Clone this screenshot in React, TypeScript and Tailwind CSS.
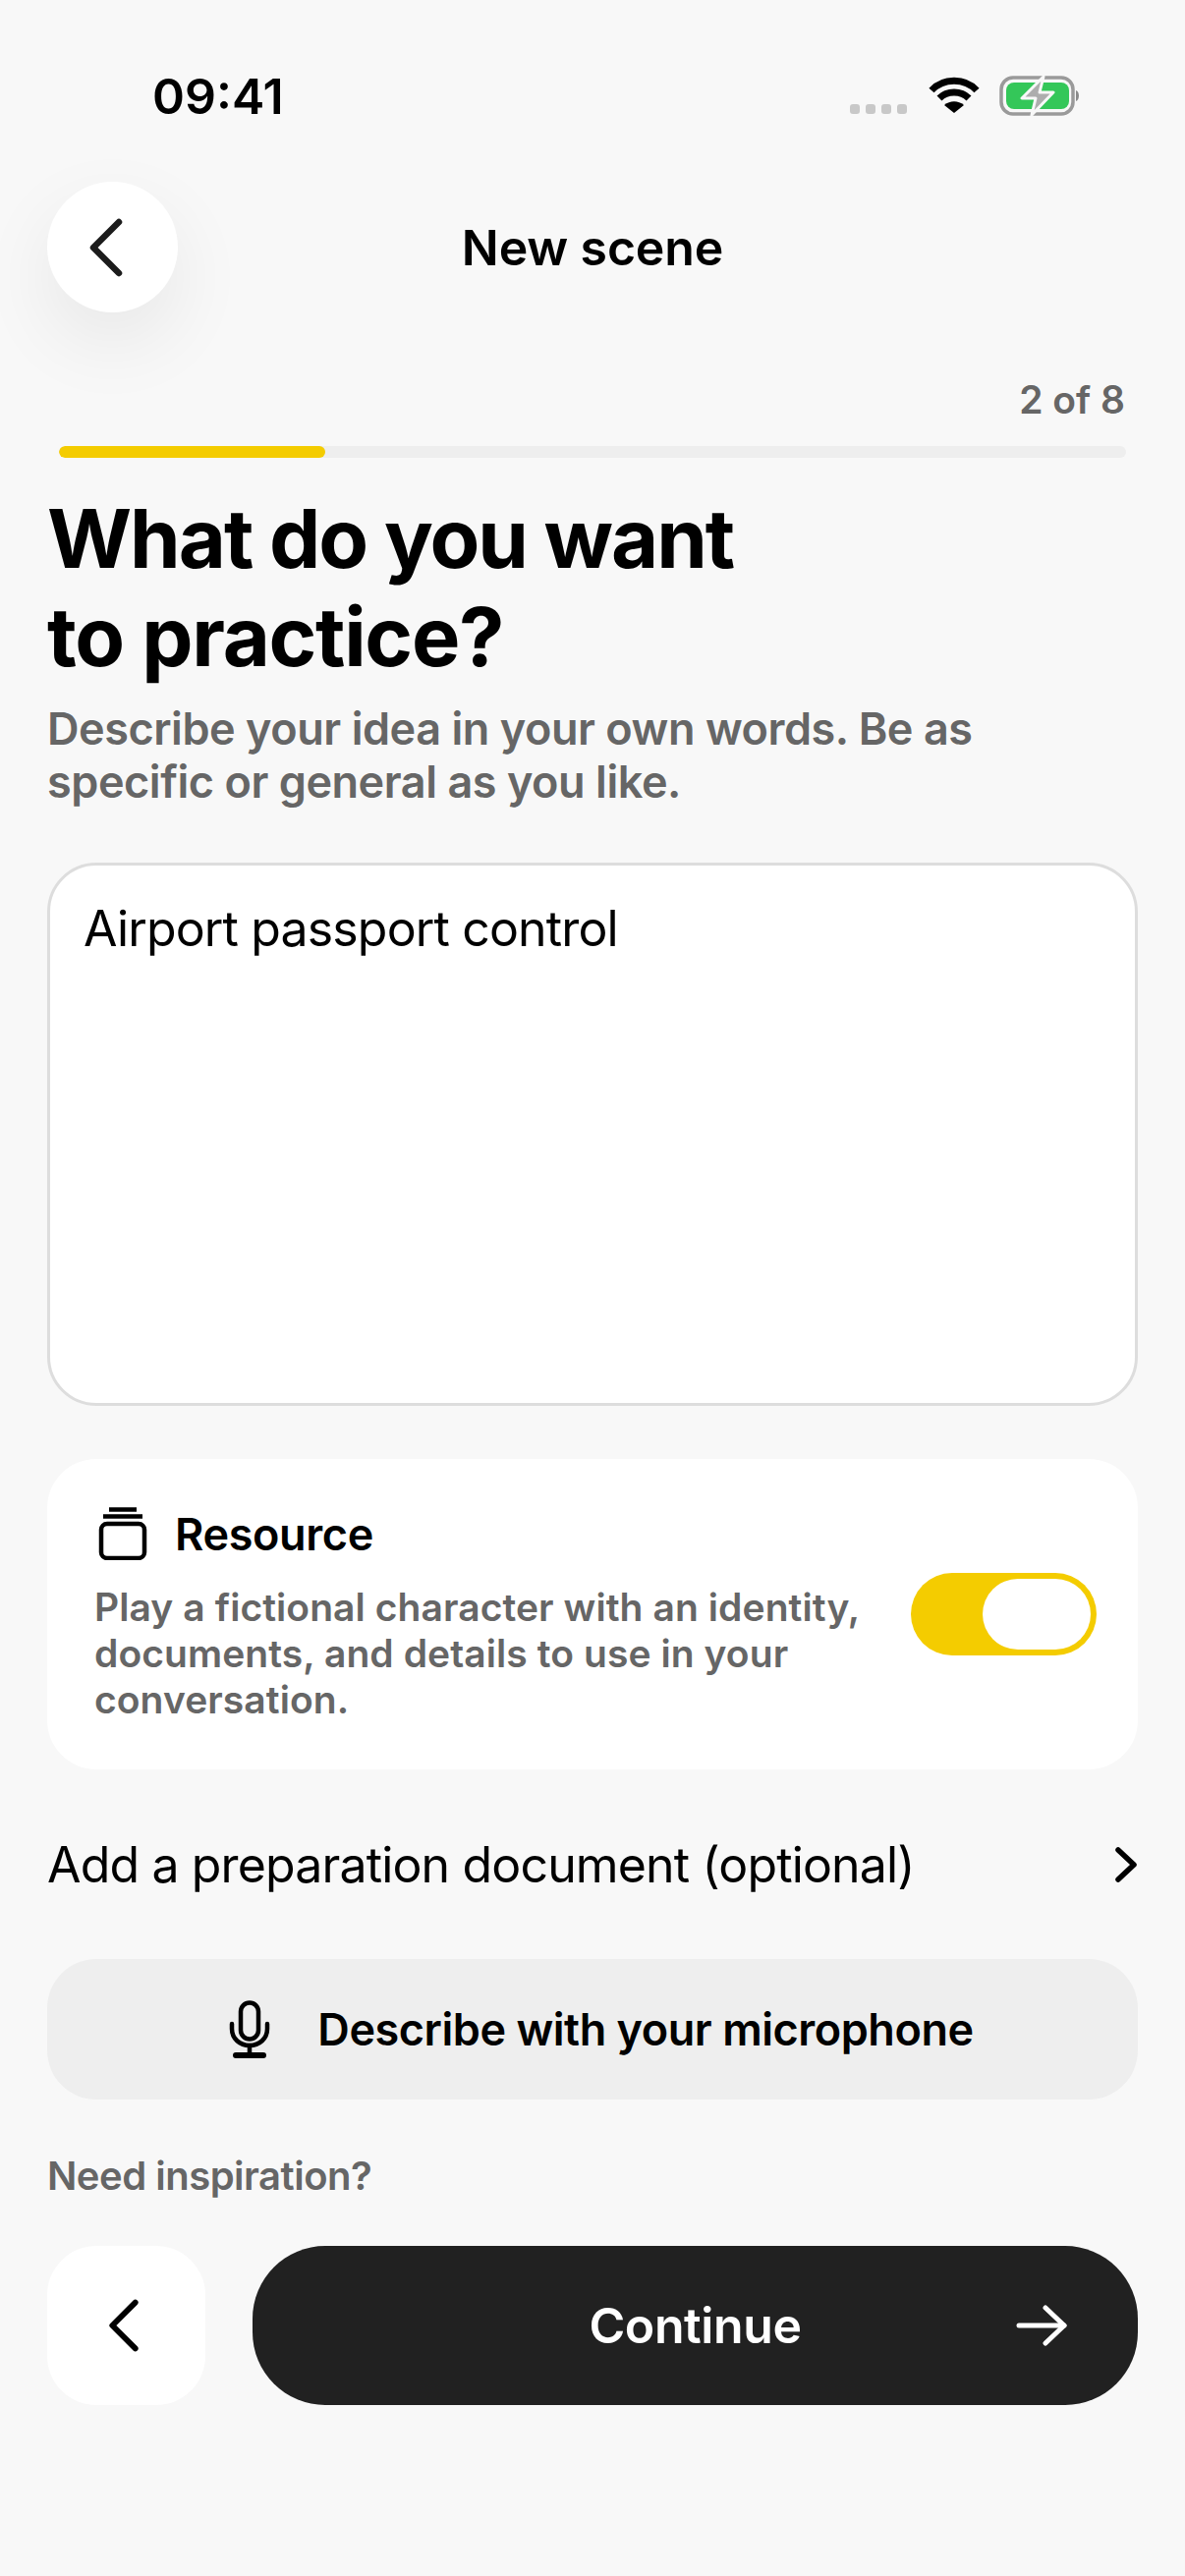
import React from "react";

const Chevron = ({ className }: { className?: string }) => (
  <svg viewBox="0 0 40 60" className={className} fill="none" stroke="currentColor" strokeWidth="6.5" strokeLinecap="round" strokeLinejoin="round">
    <path d="M33 4 L7 30 L33 56" />
  </svg>
);

export default function App() {
  return (
    <div className="w-[1206px] h-[2622px] bg-[#f8f8f8] overflow-hidden text-black" style={{ fontFamily: "Inter, 'Liberation Sans', sans-serif" }}>
      {/* status bar */}
      <div className="h-[185px] pt-[67px] pl-[155px] pr-[107px] flex justify-between items-start">
        <span className="text-[50px] leading-[62px] font-semibold">09:41</span>
        <div className="flex items-end pt-[9px]">
          <div className="flex gap-[6px] mb-[2px]">
            <span className="w-[10px] h-[10px] rounded-[3px] bg-[#c8c8c8]" />
            <span className="w-[10px] h-[10px] rounded-[3px] bg-[#c8c8c8]" />
            <span className="w-[10px] h-[10px] rounded-[3px] bg-[#c8c8c8]" />
            <span className="w-[10px] h-[10px] rounded-[3px] bg-[#c8c8c8]" />
          </div>
          <svg width="52" height="38" viewBox="0 0 52 38" fill="none" stroke="#000" strokeWidth="7" className="ml-[22px] mb-[2px]">
            <path d="M3 14 C15 1 37 1 49 14" />
            <path d="M11 22 C19 14 33 14 41 22" />
            <path d="M26 37 L16 29 C22 24 30 24 36 29 Z" fill="#000" stroke="none" />
          </svg>
          <svg width="82" height="42" viewBox="0 0 82 42" className="ml-[20px]">
            <rect x="2" y="3" width="73" height="37" rx="12" fill="none" stroke="#9a9a9a" strokeWidth="3.5" />
            <rect x="7" y="8" width="64" height="27" rx="8" fill="#34c759" />
            <path d="M78 16 C82 17 82 26 78 27 Z" fill="#8a8a8a" />
            <path d="M45 2 L23 24 H37 L33 41 L55 18 H41 Z" fill="#adadad" stroke="#f8f8f8" strokeWidth="3" strokeLinejoin="round" />
          </svg>
        </div>
      </div>

      <div className="px-[48px]">
        {/* header */}
        <div className="relative h-[133px] flex items-center justify-center">
          <button className="absolute left-0 top-0 w-[133px] h-[133px] rounded-full bg-white shadow-[0_30px_80px_rgba(0,0,0,0.07)] flex items-center justify-center text-[#1c1c1c]">
            <Chevron className="w-[40px] h-[60px] -ml-[14px]" />
          </button>
          <h1 className="text-[50px] leading-[62px] font-semibold tracking-[-0.15px]">New scene</h1>
        </div>

        {/* progress */}
        <div className="mt-[66px] text-right pr-[13px] text-[39px] leading-[46px] font-semibold text-[#666666]">2 of 8</div>
        <div className="mt-[24px] mx-[12px] h-[12px] rounded-full bg-[#eeeeee] overflow-hidden">
          <div className="h-full w-[271px] rounded-full bg-[#f4cc00]" />
        </div>

        {/* title */}
        <h2 className="mt-[32px] text-[83px] leading-[100px] font-bold tracking-[-2px]">
          What do you want<br /><span className="tracking-[-1.3px]">to practice?</span>
        </h2>
        <p className="mt-[17px] text-[45px] leading-[53.5px] font-semibold tracking-[-0.45px] text-[#666666]">Describe your idea in your own words. Be as<br />specific or general as you like.</p>

        {/* textarea */}
        <div className="mt-[56px] h-[553px] rounded-[50px] bg-white border-[3px] border-[#dddddd] pt-[31px] pl-[34px] text-[50px] leading-[66px] tracking-[-0.85px]">Airport passport control</div>

        {/* resource card */}
        <div className="mt-[54px] h-[316px] rounded-[50px] bg-white pl-[48px] pr-[42px] pt-[48px] flex items-center justify-between">
          <div className="self-start">
            <div className="flex items-center gap-[28px] h-[60px] -mt-[1px]">
              <svg width="50" height="54" viewBox="0 0 50 54" fill="none" stroke="#000" strokeWidth="4.5" className="ml-[4px] -mt-[2px]">
                <rect x="3" y="17" width="44" height="35" rx="6" />
                <path d="M5 9.5 H45" />
                <path d="M11 2.5 H39" />
              </svg>
              <span className="text-[45px] leading-[56px] font-semibold tracking-[-0.35px]">Resource</span>
            </div>
            <p className="mt-[20px] text-[39px] leading-[47px] font-semibold tracking-[0.08px] text-[#666666]">Play a fictional character with an identity,<br />documents, and details to use in your<br />conversation.</p>
          </div>
          <div className="w-[189px] h-[84px] rounded-full bg-[#f4cc00] p-[6px] flex justify-end -mt-[48px] shrink-0">
            <span className="w-[110px] h-[72px] rounded-full bg-white" />
          </div>
        </div>

        {/* prep doc row */}
        <div className="mt-[66px] h-[62px] flex items-center justify-between">
          <span className="text-[50px] leading-[62px] tracking-[-0.85px]">Add a preparation document (optional)</span>
          <svg width="24" height="36" viewBox="0 0 24 36" fill="none" stroke="#000" strokeWidth="5.5" strokeLinecap="round" strokeLinejoin="round">
            <path d="M4 3 L20 18 L4 33" />
          </svg>
        </div>

        {/* mic button */}
        <div className="mt-[65px] h-[143px] rounded-[50px] bg-[#eeeeee] flex items-center justify-center gap-[48px] pl-[18px]">
          <svg width="42" height="60" viewBox="0 0 42 60" fill="none" stroke="#000" strokeWidth="4.5" strokeLinecap="round">
            <rect x="12" y="2.5" width="18" height="37" rx="9" />
            <path d="M3 24 V29 C3 39 11 46 21 46 C31 46 39 39 39 29 V24" />
            <path d="M21 46 V55" />
            <path d="M7 56 H35" strokeWidth="6" />
          </svg>
          <span className="text-[45px] leading-[58px] font-semibold tracking-[-0.45px]">Describe with your microphone</span>
        </div>

        {/* inspiration */}
        <p className="mt-[55px] text-[40px] leading-[46px] font-semibold tracking-[-0.5px] text-[#666666]">Need inspiration?</p>

        {/* bottom buttons */}
        <div className="mt-[48px] flex gap-[48px] h-[162px]">
          <button className="w-[161px] h-full rounded-[50px] bg-white flex items-center justify-center text-black">
            <Chevron className="w-[36px] h-[54px] -ml-[6px]" />
          </button>
          <button className="relative flex-1 h-full rounded-[74px] bg-[#212121] flex items-center justify-center text-white">
            <span className="text-[50px] leading-[62px] font-semibold tracking-[-0.4px]">Continue</span>
            <svg width="52" height="42" viewBox="0 0 52 42" fill="none" stroke="#fff" strokeWidth="5" strokeLinecap="round" strokeLinejoin="round" className="absolute right-[72px] top-[60px]">
              <path d="M3 21 H49" />
              <path d="M30 3 L49 21 L30 39" />
            </svg>
          </button>
        </div>
      </div>
    </div>
  );
}
